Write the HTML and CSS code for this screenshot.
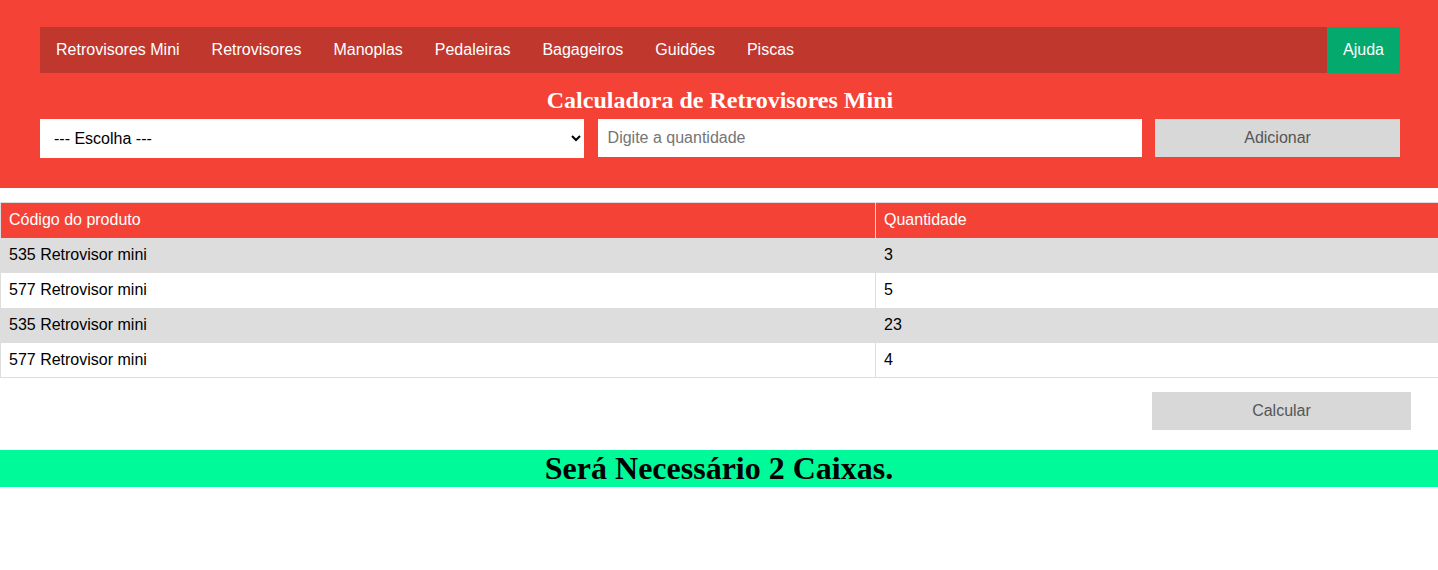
FILE: index.html
```html
<!DOCTYPE html>
<html lang="pt">
<head>
<meta charset="utf-8">
<title>Calculadora de Retrovisores Mini</title>
<link rel="stylesheet" href="styles.css">
</head>
<body>
<header class="top">
  <nav class="nav">
    <div class="nav-links">
      <a class="nav-link" href="#">Retrovisores Mini</a>
      <a class="nav-link" href="#">Retrovisores</a>
      <a class="nav-link" href="#">Manoplas</a>
      <a class="nav-link" href="#">Pedaleiras</a>
      <a class="nav-link" href="#">Bagageiros</a>
      <a class="nav-link" href="#">Guidões</a>
      <a class="nav-link" href="#">Piscas</a>
    </div>
    <a class="nav-link help" href="#">Ajuda</a>
  </nav>
  <h2 class="title">Calculadora de Retrovisores Mini</h2>
  <div class="form">
    <select class="field select">
      <option>--- Escolha ---</option>
    </select>
    <input class="field input" type="text" placeholder="Digite a quantidade">
    <button class="btn add">Adicionar</button>
  </div>
</header>

<table class="items">
  <thead>
    <tr><th class="col-code">Código do produto</th><th>Quantidade</th></tr>
  </thead>
  <tbody>
    <tr><td>535 Retrovisor mini</td><td>3</td></tr>
    <tr><td>577 Retrovisor mini</td><td>5</td></tr>
    <tr><td>535 Retrovisor mini</td><td>23</td></tr>
    <tr><td>577 Retrovisor mini</td><td>4</td></tr>
  </tbody>
</table>

<div class="actions">
  <button class="btn calc">Calcular</button>
</div>

<div class="result">Será Necessário 2 Caixas.</div>
</body>
</html>
```

FILE: styles.css
```css
* { box-sizing: border-box; }
html { overflow-x: hidden; }
html, body { margin: 0; padding: 0; background: #fff; }
body { font-family: "Liberation Sans", Arial, sans-serif; font-size: 16px; color: #000; }

.top {
  background: #f44336;
  padding: 27px 38px 30px 40px;
}
.nav {
  display: flex;
  justify-content: space-between;
  background: #bf372d;
  height: 46px;
}
.nav-links { display: flex; }
.nav-link {
  display: block;
  color: #fff;
  text-decoration: none;
  font-size: 16px;
  line-height: 46px;
  padding: 0 16px;
}
.help { background: #04aa6d; }

.title {
  margin: 14px 0 5px;
  font-family: "Liberation Serif", "Times New Roman", serif;
  font-size: 24px;
  font-weight: bold;
  line-height: 27px;
  color: #fff;
  text-align: center;
}

.form {
  display: flex;
  justify-content: space-between;
  align-items: flex-start;
}
.field {
  font-family: "Liberation Sans", Arial, sans-serif;
  font-size: 16px;
  border: none;
  outline: none;
  background: #fff;
  color: #000;
  margin: 0;
}
.select {
  width: 40%;
  height: 39px;
  padding: 0 6px 0 10px;
}
.input {
  width: 40%;
  height: 38px;
  padding: 0 10px;
}
.input::placeholder { color: #757575; }
.btn {
  font-family: "Liberation Sans", Arial, sans-serif;
  font-size: 16px;
  color: #555;
  background: #d8d8d8;
  border: none;
  height: 38px;
  margin: 0;
  padding: 0;
}
.add { width: 18%; }

.items {
  margin-top: 14px;
  width: calc(100% + 2px);
  border-collapse: collapse;
  border: 1px solid #ddd;
}
.items th, .items td {
  text-align: left;
  font-weight: normal;
  padding: 0 8px;
  height: 35px;
  line-height: 18px;
  border-left: 1px solid #ddd;
}
.items th { background: #f44336; color: #fff; }
.col-code { width: 875px; }
.items tbody tr:nth-child(odd) td { background: #ddd; }

.actions {
  display: flex;
  justify-content: flex-end;
  padding: 14px 27px 0 0;
}
.calc { width: 259px; }

.result {
  margin-top: 20px;
  background: #00fa9a;
  height: 37px;
  font-family: "Liberation Serif", "Times New Roman", serif;
  font-size: 32px;
  font-weight: bold;
  line-height: 37px;
  text-align: center;
}
```
